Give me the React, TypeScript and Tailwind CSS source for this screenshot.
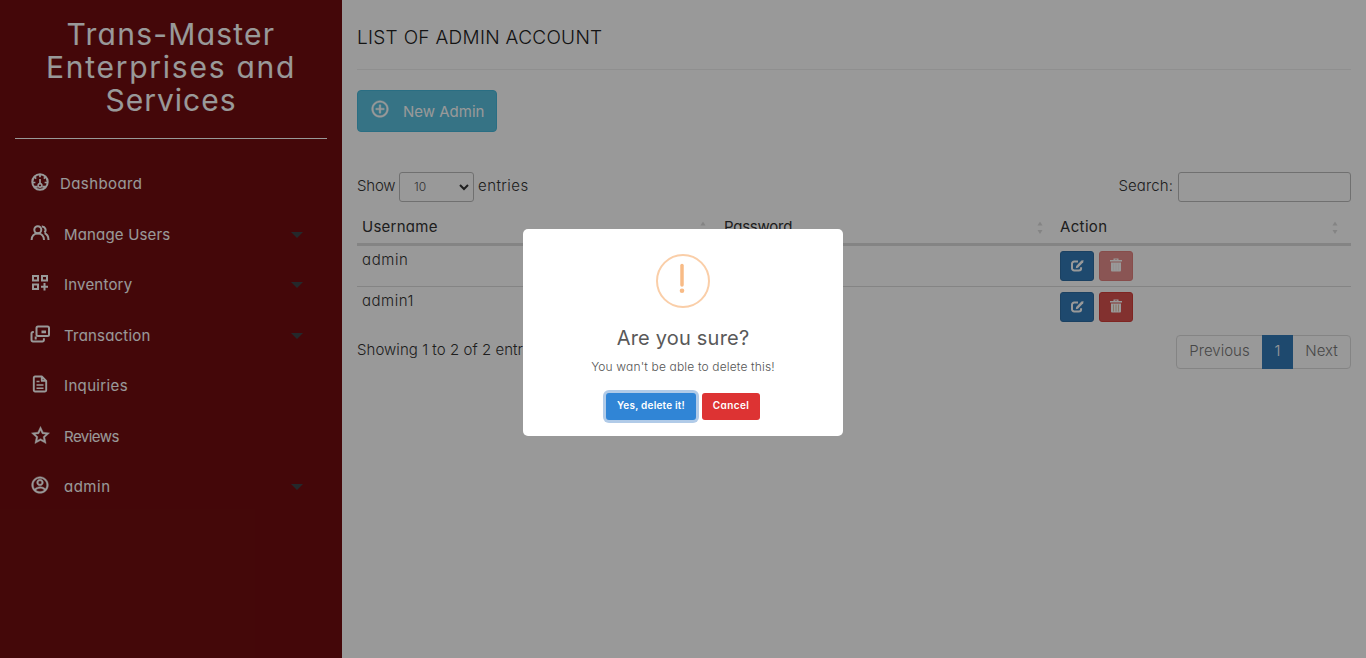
import type { ReactNode } from "react";
import { RiAccountCircleLine, RiAddCircleLine, RiStarLine } from "react-icons/ri";

function DashboardIcon() {
  return (
    <svg viewBox="0 0 20 20" className="size-5" fill="none" stroke="currentColor" strokeWidth="2">
      <circle cx="10" cy="10" r="7.700" />
      <path d="M10 2.500v2.700M4.500 5l1.700 1.700M15.500 5l-1.700 1.700M2.800 10.500h2.600M17.200 10.500h-2.600" strokeWidth="1.700" />
      <path d="M4 14.700h3.700M12.300 14.700H16" />
      <path d="M10 7v5.500" strokeWidth="1.700" />
      <circle cx="10" cy="13.300" r="1.900" strokeWidth="1.500" />
    </svg>
  );
}

function UsersIcon() {
  return (
    <svg viewBox="0 0 20 20" className="size-5" fill="none" stroke="currentColor" strokeWidth="2">
      <circle cx="7.800" cy="6.800" r="3.500" />
      <path d="M1.600 17c0-3.800 2.600-6.600 6.200-6.600s6.200 2.800 6.200 6.600" />
      <path d="M11.800 3.400a3.500 3.500 0 0 1 2.600 6.100M14.600 10.200c2.400 1 3.900 3.500 3.900 6.800" />
    </svg>
  );
}

function InventoryIcon() {
  return (
    <svg viewBox="0 0 20 20" className="size-5" fill="none" stroke="currentColor" strokeWidth="2">
      <path d="M3 3h5v4.500H3zM12 3h5v4.500h-5zM3 11.500h5v4.500H3zM14.500 10v7.500M11 13.800h7" />
    </svg>
  );
}

function TransactionIcon() {
  return (
    <svg viewBox="0 0 20 20" className="size-5" fill="none" stroke="currentColor" strokeWidth="2">
      <rect x="6.500" y="2.500" width="12.500" height="9.500" rx="1.500" />
      <path d="M3.800 8H2.900A1.400 1.400 0 0 0 1.500 9.400v6.700a1.400 1.400 0 0 0 1.400 1.400h9.600a1.400 1.400 0 0 0 1.400-1.400v-1.800" />
      <path d="M11.500 7.800h4.500M4.700 14h2" strokeWidth="2.800" />
    </svg>
  );
}

function FileIcon() {
  return (
    <svg viewBox="0 0 20 20" className="size-5" fill="none" stroke="currentColor" strokeWidth="1.900" strokeLinejoin="round">
      <path d="M11.800 2.500H5a1.200 1.200 0 0 0-1.200 1.200v12.600A1.200 1.200 0 0 0 5 17.500h10a1.200 1.200 0 0 0 1.200-1.200V6.900zM11.800 2.500v4.400h4.400" />
      <path d="M6.500 7.500h3M6.500 11h7M6.500 14.200h7" strokeWidth="1.600" />
    </svg>
  );
}

function EditIcon() {
  return (
    <svg viewBox="0 0 14 14" className="h-3.5 w-3.5" fill="none" stroke="currentColor" strokeWidth="2">
      <path d="M8 2.600H4.200A2.200 2.200 0 0 0 2 4.800v4.400a2.200 2.200 0 0 0 2.200 2.200h4.700a2.200 2.200 0 0 0 2.200-2.200V8.200" />
      <path d="M5.800 9.300l.4-2.400 5.200-5.300 2.200-.3-.4 2-5.200 5.500z" fill="currentColor" stroke="none" />
    </svg>
  );
}

function TrashIcon({ bars }: { bars: string }) {
  return (
    <svg viewBox="0 0 12 14" className="h-3.5 w-3" fill="currentColor">
      <path d="M3.500 0.500h5v1.500H12v1.500H0V2h3.500zM4.800 1.500V2h2.400v-.5z" fillRule="evenodd" />
      <path d="M1 4.500h10v8a1 1 0 0 1-1 1H2a1 1 0 0 1-1-1z" />
      <path d="M3.500 5.500v7M6 5.500v7M8.500 5.500v7" stroke={bars} strokeWidth=".5" />
    </svg>
  );
}

interface NavItemProps {
  icon: ReactNode;
  label: string;
  text: string;
  caret?: boolean;
}

function NavItem({ icon, label, text, caret }: NavItemProps) {
  return (
    <li className="flex h-[50.5px] items-center pr-[39px] pl-[30px]">
      <span className="-mt-[4px] flex w-5 justify-center text-[20px]">{icon}</span>
      <span className={`whitespace-nowrap text-[15px] ${text}`}>{label}</span>
      {caret && (
        <svg viewBox="0 0 12 6" className="ml-auto h-1.5 w-3" fill="#3d4449">
          <path d="M0 0h12L6 6z" />
        </svg>
      )}
    </li>
  );
}

function SortArrows() {
  return (
    <svg viewBox="0 0 6 14" className="h-3.5 w-1.5" fill="#dcdcdc">
      <path d="M0.500 4.500l2.500-4 2.500 4zM0.500 9h5l-2.500 4z" />
    </svg>
  );
}

function Row({ name, text, faded, last }: { name: string; text: string; faded?: boolean; last?: boolean }) {
  return (
    <div className={`flex border-[#ddd] px-[5px] pt-[5px] ${last ? "h-[40px]" : "h-[41px] border-b"}`}>
      <span className={`-mt-px w-[698px] text-[15px] leading-[20px] font-light ${text}`}>{name}</span>
      <span className="flex gap-[5px]">
        <button className="flex h-[30px] w-[34px] items-center justify-center rounded-[3px] border border-[#2e6da4] bg-[#337ab7] text-white">
          <EditIcon />
        </button>
        <button
          className={`flex h-[30px] w-[34px] items-center justify-center rounded-[3px] border border-[#d43f3a] bg-[#d9534f] pb-0.5 text-white ${faded ? "opacity-65" : ""}`}
        >
          <TrashIcon bars={faded ? "#f3dcdb" : "#d08a50"} />
        </button>
      </span>
    </div>
  );
}

export default function App() {
  return (
    <div className="relative flex h-[658px] w-[1366px] overflow-hidden bg-white font-['Inter',sans-serif] text-[#333] [font-feature-settings:'cv11']">
      <aside className="w-[342px] shrink-0 bg-[#720d0f] px-[15px] text-white">
        <h1 className="flex h-[139px] flex-col items-center border-b border-white pt-[18px] text-[30px] leading-[33px]">
          <span className="tracking-[1.25px]">Trans-Master</span>
          <span className="tracking-[1.75px]">Enterprises and</span>
          <span className="tracking-[1px]">Services</span>
        </h1>
        <ul className="-mx-[15px] mt-5">
          <NavItem icon={<DashboardIcon />} label="Dashboard" text="ml-2.5 tracking-[0.4px]" />
          <NavItem icon={<UsersIcon />} label="Manage Users" text="ml-3.5 tracking-[0.17px] pt-px" caret />
          <NavItem icon={<InventoryIcon />} label="Inventory" text="ml-3.5 tracking-[0.2px]" caret />
          <NavItem icon={<TransactionIcon />} label="Transaction" text="ml-3.5 tracking-[0.2px] pt-px" caret />
          <NavItem icon={<FileIcon />} label="Inquiries" text="ml-3.5 tracking-[0.35px]" />
          <NavItem
            icon={<RiStarLine className="mt-px size-[19px]" stroke="currentColor" strokeWidth={0.5} />}
            label="Reviews"
            text="ml-3.5 tracking-[-0.55px] pt-px"
          />
          <NavItem
            icon={<RiAccountCircleLine stroke="currentColor" strokeWidth={0.5} />}
            label="admin"
            text="ml-3.5 tracking-[0.5px]"
            caret
          />
        </ul>
      </aside>

      <main className="flex-1 px-[15px]">
        <h2 className="h-[70px] border-b border-[#eee] pt-[27px] text-[19px] font-light leading-[22px] tracking-[0.3px] text-[#222]">
          LIST OF ADMIN ACCOUNT
        </h2>
        <button className="mt-5 flex h-[42px] w-[140px] items-center rounded-[4px] border border-[#46b8da] bg-[#5bc0de] pl-3 text-white">
          <RiAddCircleLine className="-mt-1 size-5" stroke="currentColor" strokeWidth={0.5} />
          <span className="ml-[13px] whitespace-nowrap pt-[3px] text-[15px]">New Admin</span>
        </button>

        <div className="mt-10 flex h-[30px] items-center text-[15px] font-light">
          <span className="w-[42px] whitespace-nowrap pb-px tracking-[-0.2px]">Show</span>
          <span className="flex h-[30px] w-[75px] items-center justify-between rounded-[3px] border border-[#bbb] pr-1 pl-3.5 text-[12px] text-[#555]">
            10
            <svg viewBox="0 0 10 7" className="h-[7px] w-2.5" fill="none" stroke="#333" strokeWidth="2">
              <path d="M1 1l4 4 4-4" />
            </svg>
          </span>
          <span className="ml-1 whitespace-nowrap pb-px tracking-[0.45px]">entries</span>
          <span className="ml-auto whitespace-nowrap pb-px tracking-[0.1px]">Search:</span>
          <span className="ml-[5px] h-[30px] w-[173px] rounded-[3px] border border-[#bbb]" />
        </div>

        <div className="mt-[10px] flex h-[34px] items-center border-b-[3px] border-[#ddd] text-[15px]">
          <div className="flex w-[362px] items-center justify-between pr-[13px] pl-[5px]">
            <span className="tracking-[0.25px]">Username</span>
            <SortArrows />
          </div>
          <div className="flex w-[336px] items-center justify-between pr-[12px] pl-[5px]">
            <span className="tracking-[-0.25px]">Password</span>
            <SortArrows />
          </div>
          <div className="flex w-[296px] items-center justify-between pr-[13px] pl-[5px]">
            <span className="tracking-[0.35px]">Action</span>
            <SortArrows />
          </div>
        </div>
        <Row name="admin" text="tracking-[0.6px]" faded />
        <Row name="admin1" text="tracking-[0.5px]" last />

        <div className="mt-2 flex h-[34px] justify-between text-[15px]">
          <span className="pt-[5px] leading-[20px] font-light tracking-[0.05px]">Showing 1 to 2 of 2 entries</span>
          <div className="flex h-[34px] rounded-[4px] border border-[#ddd] font-light text-[#777]">
            <span className="flex w-[85px] items-center justify-center pb-0.5">Previous</span>
            <span className="-my-px flex w-[31px] items-center justify-center bg-[#337ab7] pb-0.5 text-white">1</span>
            <span className="flex w-[57px] items-center justify-center pb-0.5">Next</span>
          </div>
        </div>
      </main>

      <div className="absolute inset-0 flex justify-center bg-black/40">
        <div className="mt-[229px] flex h-[207px] w-[320px] flex-col items-center rounded-[5px] bg-white">
          <svg viewBox="0 0 54 54" className="mt-[25px] size-[54px]" fill="none">
            <circle cx="27" cy="27" r="26" stroke="#facea8" strokeWidth="2" />
            <path d="M26 11.500v19.500" stroke="#f8bb86" strokeWidth="3.500" strokeLinecap="round" />
            <circle cx="26" cy="36.800" r="2.300" fill="#f8bb86" />
          </svg>
          <h3 className="mt-[17px] text-[20px] leading-[26px] tracking-[0.2px] text-[#595959]">Are you sure?</h3>
          <p className="mt-[7px] text-[12px] leading-[18px] font-light tracking-[0.15px] text-[#545454]">
            You wan't be able to delete this!
          </p>
          <div className="mt-[17px] flex gap-1.5 text-[10px] font-semibold text-white">
            <button className="h-[27px] w-[90px] rounded-[3px] bg-[#3085d6] pb-0.5 tracking-[0.2px] ring-3 ring-[#b1cbe8]">
              Yes, delete it!
            </button>
            <button className="h-[27px] w-[58px] rounded-[3px] bg-[#dd3333] pb-0.5 tracking-[0.4px]">Cancel</button>
          </div>
        </div>
      </div>
    </div>
  );
}
